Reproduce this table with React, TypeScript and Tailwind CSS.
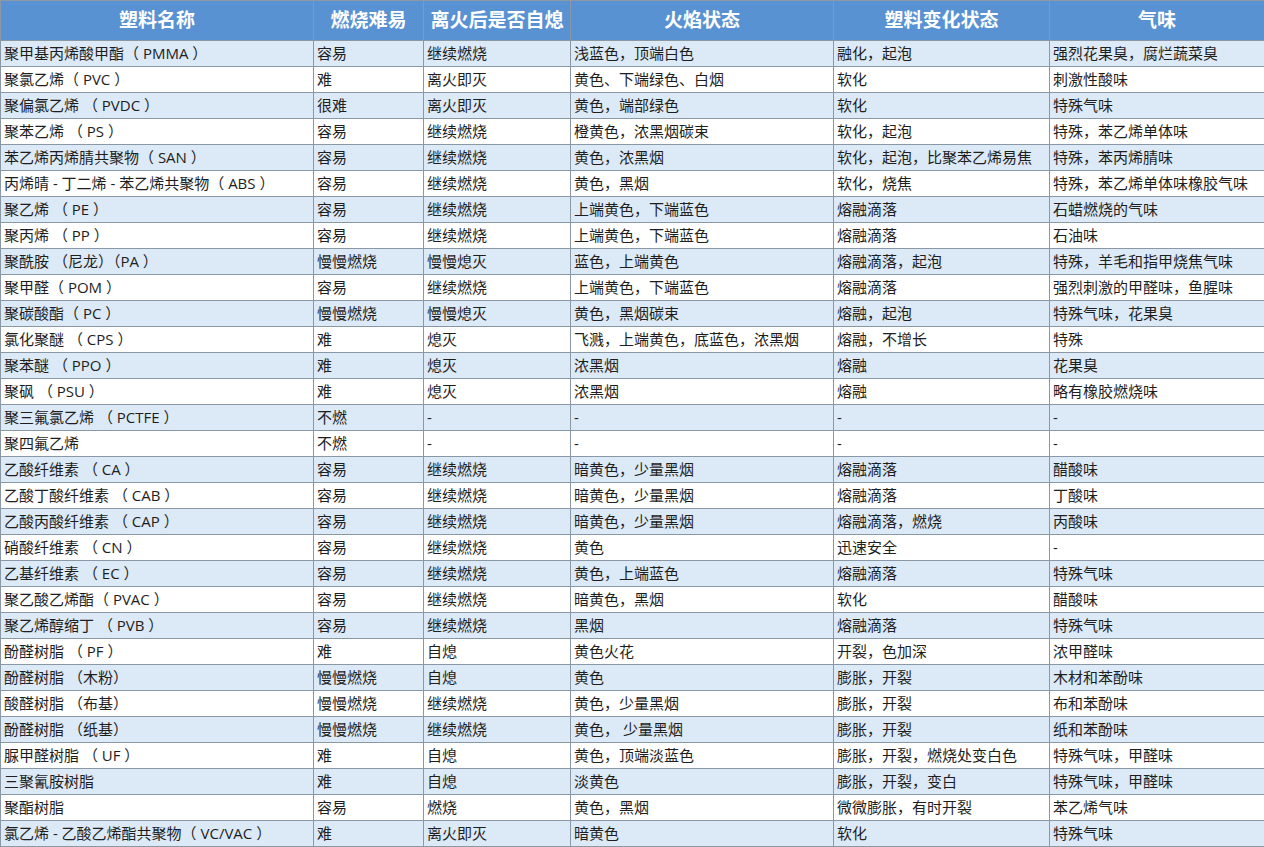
const headers = ["塑料名称", "燃烧难易", "离火后是否自熄", "火焰状态", "塑料变化状态", "气味"];

const rows: string[][] = [
  ["聚甲基丙烯酸甲酯（ PMMA ）", "容易", "继续燃烧", "浅蓝色，顶端白色", "融化，起泡", "强烈花果臭，腐烂蔬菜臭"],
  ["聚氯乙烯（ PVC ）", "难", "离火即灭", "黄色、下端绿色、白烟", "软化", "刺激性酸味"],
  ["聚偏氯乙烯 （ PVDC ）", "很难", "离火即灭", "黄色，端部绿色", "软化", "特殊气味"],
  ["聚苯乙烯 （ PS ）", "容易", "继续燃烧", "橙黄色，浓黑烟碳束", "软化，起泡", "特殊，苯乙烯单体味"],
  ["苯乙烯丙烯腈共聚物（ SAN ）", "容易", "继续燃烧", "黄色，浓黑烟", "软化，起泡，比聚苯乙烯易焦", "特殊，苯丙烯腈味"],
  ["丙烯晴 - 丁二烯 - 苯乙烯共聚物（ ABS ）", "容易", "继续燃烧", "黄色，黑烟", "软化，烧焦", "特殊，苯乙烯单体味橡胶气味"],
  ["聚乙烯 （ PE ）", "容易", "继续燃烧", "上端黄色，下端蓝色", "熔融滴落", "石蜡燃烧的气味"],
  ["聚丙烯 （ PP ）", "容易", "继续燃烧", "上端黄色，下端蓝色", "熔融滴落", "石油味"],
  ["聚酰胺 （尼龙）（PA ）", "慢慢燃烧", "慢慢熄灭", "蓝色，上端黄色", "熔融滴落，起泡", "特殊，羊毛和指甲烧焦气味"],
  ["聚甲醛（ POM ）", "容易", "继续燃烧", "上端黄色，下端蓝色", "熔融滴落", "强烈刺激的甲醛味，鱼腥味"],
  ["聚碳酸酯（ PC ）", "慢慢燃烧", "慢慢熄灭", "黄色，黑烟碳束", "熔融，起泡", "特殊气味，花果臭"],
  ["氯化聚醚 （ CPS ）", "难", "熄灭", "飞溅，上端黄色，底蓝色，浓黑烟", "熔融，不增长", "特殊"],
  ["聚苯醚 （ PPO ）", "难", "熄灭", "浓黑烟", "熔融", "花果臭"],
  ["聚砜 （ PSU ）", "难", "熄灭", "浓黑烟", "熔融", "略有橡胶燃烧味"],
  ["聚三氟氯乙烯 （ PCTFE ）", "不燃", "-", "-", "-", "-"],
  ["聚四氟乙烯", "不燃", "-", "-", "-", "-"],
  ["乙酸纤维素 （ CA ）", "容易", "继续燃烧", "暗黄色，少量黑烟", "熔融滴落", "醋酸味"],
  ["乙酸丁酸纤维素 （ CAB ）", "容易", "继续燃烧", "暗黄色，少量黑烟", "熔融滴落", "丁酸味"],
  ["乙酸丙酸纤维素 （ CAP ）", "容易", "继续燃烧", "暗黄色，少量黑烟", "熔融滴落，燃烧", "丙酸味"],
  ["硝酸纤维素 （ CN ）", "容易", "继续燃烧", "黄色", "迅速安全", "-"],
  ["乙基纤维素 （ EC ）", "容易", "继续燃烧", "黄色，上端蓝色", "熔融滴落", "特殊气味"],
  ["聚乙酸乙烯酯（ PVAC ）", "容易", "继续燃烧", "暗黄色，黑烟", "软化", "醋酸味"],
  ["聚乙烯醇缩丁 （ PVB ）", "容易", "继续燃烧", "黑烟", "熔融滴落", "特殊气味"],
  ["酚醛树脂 （ PF ）", "难", "自熄", "黄色火花", "开裂，色加深", "浓甲醛味"],
  ["酚醛树脂 （木粉）", "慢慢燃烧", "自熄", "黄色", "膨胀，开裂", "木材和苯酚味"],
  ["酸醛树脂 （布基）", "慢慢燃烧", "继续燃烧", "黄色，少量黑烟", "膨胀，开裂", "布和苯酚味"],
  ["酚醛树脂 （纸基）", "慢慢燃烧", "继续燃烧", "黄色， 少量黑烟", "膨胀，开裂", "纸和苯酚味"],
  ["脲甲醛树脂 （ UF ）", "难", "自熄", "黄色，顶端淡蓝色", "膨胀，开裂，燃烧处变白色", "特殊气味，甲醛味"],
  ["三聚氰胺树脂", "难", "自熄", "淡黄色", "膨胀，开裂，变白", "特殊气味，甲醛味"],
  ["聚酯树脂", "容易", "燃烧", "黄色，黑烟", "微微膨胀，有时开裂", "苯乙烯气味"],
  ["氯乙烯 - 乙酸乙烯酯共聚物（ VC/VAC ）", "难", "离火即灭", "暗黄色", "软化", "特殊气味"],
];

export default function App() {
  return (
    <div className="w-[1264px] h-[847px] overflow-hidden bg-white font-['Open_Sans','Noto_Sans_CJK_SC',sans-serif] text-[#1e1e1e]">
      <table className="w-full table-fixed border-collapse">
        <colgroup>
          <col className="w-[313px]" />
          <col className="w-[110px]" />
          <col className="w-[147px]" />
          <col className="w-[263px]" />
          <col className="w-[216px]" />
          <col className="w-[215px]" />
        </colgroup>
        <thead>
          <tr className="h-[40px] bg-[#5892d2]">
            {headers.map((h) => (
              <th
                key={h}
                className="border border-[#8a97a5] text-center text-[19px] font-bold text-white leading-none"
              >
                {h}
              </th>
            ))}
          </tr>
        </thead>
        <tbody>
          {rows.map((r, i) => (
            <tr key={i} className={i % 2 === 0 ? "h-[26px] bg-[#dce9f6]" : "h-[26px] bg-white"}>
              {r.map((c, j) => (
                <td
                  key={j}
                  className="border border-[#8a97a5] pl-[3px] text-left text-[15px] leading-none whitespace-nowrap overflow-hidden"
                >
                  {c}
                </td>
              ))}
            </tr>
          ))}
        </tbody>
      </table>
    </div>
  );
}
